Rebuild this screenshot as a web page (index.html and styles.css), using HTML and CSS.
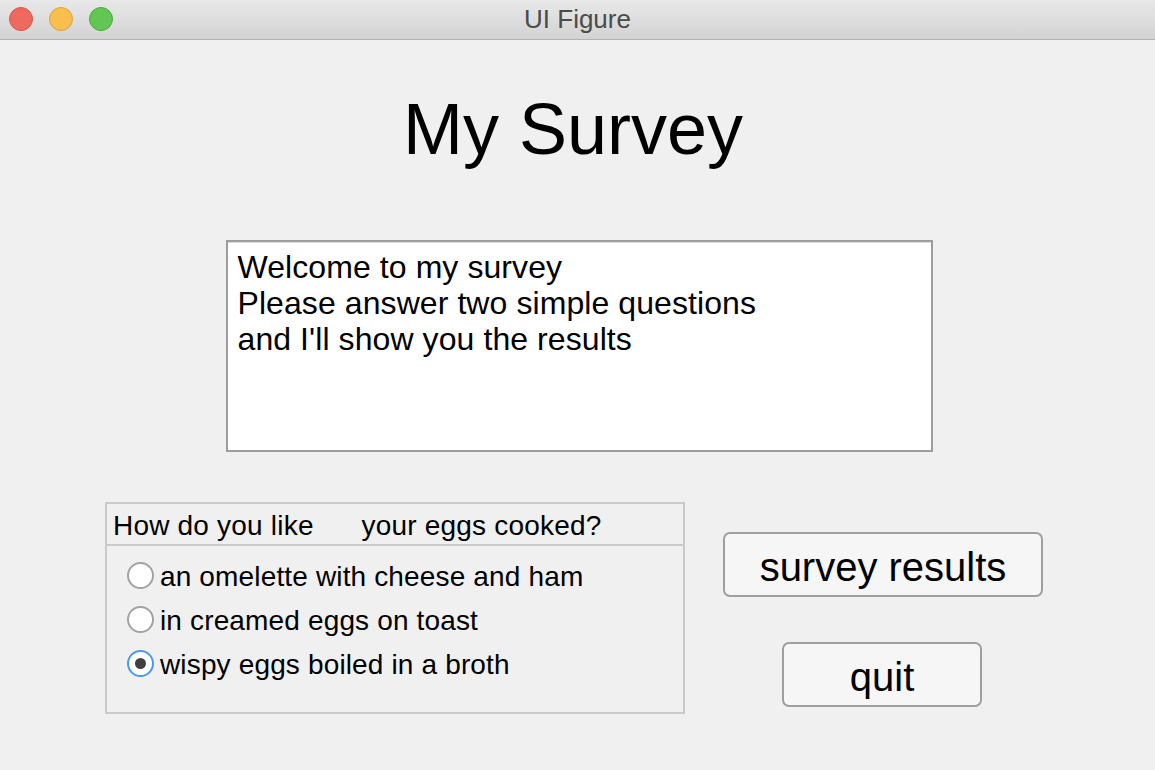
FILE: index.html
```html
<!DOCTYPE html>
<html>
<head>
<meta charset="utf-8">
<title>UI Figure</title>
<link rel="stylesheet" href="styles.css">
</head>
<body>
<div class="window">
  <header class="titlebar">
    <div class="lights">
      <span class="light red"></span>
      <span class="light yellow"></span>
      <span class="light green"></span>
    </div>
    <div class="wintitle">UI Figure</div>
  </header>
  <main class="content">
    <h1 class="heading">My Survey</h1>
    <div class="textarea">
      <div class="line">Welcome to my survey</div>
      <div class="line">Please answer two simple questions</div>
      <div class="line">and I'll show you the results</div>
    </div>
    <div class="bottom">
      <section class="panel">
        <div class="panel-title">How do you like      your eggs cooked?</div>
        <div class="radios">
          <label class="radio"><span class="dot"></span><span class="rlabel">an omelette with cheese and ham</span></label>
          <label class="radio"><span class="dot"></span><span class="rlabel">in creamed eggs on toast</span></label>
          <label class="radio"><span class="dot checked"></span><span class="rlabel">wispy eggs boiled in a broth</span></label>
        </div>
      </section>
      <div class="buttons">
        <button class="btn btn-wide">survey results</button>
        <button class="btn btn-narrow">quit</button>
      </div>
    </div>
  </main>
</div>
</body>
</html>
```

FILE: styles.css
```css
* { box-sizing: border-box; }
html, body {
  margin: 0;
  padding: 0;
  background: #f0f0f0;
  font-family: "Liberation Sans", Arial, sans-serif;
  color: #000;
}
.window {
  width: 1155px;
  height: 770px;
  overflow: hidden;
}
.titlebar {
  position: relative;
  height: 40px;
  background: linear-gradient(#e8e8e8, #d3d3d3);
  border-bottom: 1px solid #b3b3b3;
  display: flex;
  align-items: center;
  justify-content: center;
}
.lights {
  position: absolute;
  left: 9px;
  top: 7px;
  display: flex;
  gap: 16px;
}
.light {
  width: 24px;
  height: 24px;
  border-radius: 50%;
  border: 1px solid;
}
.red { background: #ef6a5e; border-color: #d5584d; }
.yellow { background: #f6bf4f; border-color: #dca33c; }
.green { background: #62c655; border-color: #4ca83f; }
.wintitle {
  font-size: 26px;
  line-height: 39px;
  color: #4b4b4b;
}
.content {
  display: flex;
  flex-direction: column;
  align-items: center;
}
.heading {
  margin: 53px 0 0;
  font-weight: normal;
  font-size: 72px;
  line-height: 72px;
  margin-left: -9px;
}
.textarea {
  margin-top: 75px;
  margin-left: 3px;
  width: 707px;
  height: 212px;
  background: #fff;
  border: 2px solid #9d9d9d;
  box-shadow: inset 0 1px 0 #dcdcdc;
  padding: 7px 9px 7px 10px;
  font-size: 32px;
  line-height: 36px;
  letter-spacing: 0.08px;
}
.bottom {
  align-self: stretch;
  display: flex;
  margin-top: 50px;
  padding-left: 105px;
  gap: 38px;
}
.panel {
  width: 580px;
  height: 212px;
  border: 2px solid #cacaca;
}
.panel-title {
  height: 42px;
  border-bottom: 2px solid #cacaca;
  font-size: 28px;
  letter-spacing: 0.2px;
  line-height: 40px;
  padding: 2px 0 0 6px;
  white-space: pre;
}
.radios {
  padding: 7px 0 0 20px;
  display: flex;
  flex-direction: column;
}
.radio {
  height: 44px;
  display: flex;
  align-items: center;
  gap: 6px;
  font-size: 28px;
  letter-spacing: 0.15px;
}
.rlabel {
  padding-top: 4px;
}
.dot {
  width: 27px;
  height: 27px;
  border-radius: 50%;
  border: 2px solid #a2a2a2;
  background: #fff;
  display: flex;
  align-items: center;
  justify-content: center;
}
.dot.checked { border-color: #4a98ef; }
.dot.checked::after {
  content: "";
  width: 11px;
  height: 11px;
  border-radius: 50%;
  background: #404040;
}
.buttons {
  width: 320px;
  padding-top: 30px;
  display: flex;
  flex-direction: column;
  align-items: center;
  gap: 45px;
}
.btn {
  height: 65px;
  border: 2px solid #9f9f9f;
  border-radius: 7px;
  background: #f6f6f6;
  font-family: "Liberation Sans", Arial, sans-serif;
  font-size: 40px;
  color: #000;
  padding: 5px 0 0;
}
.btn-wide { width: 320px; }
.btn-narrow { width: 200px; margin-left: -2px; }
```
